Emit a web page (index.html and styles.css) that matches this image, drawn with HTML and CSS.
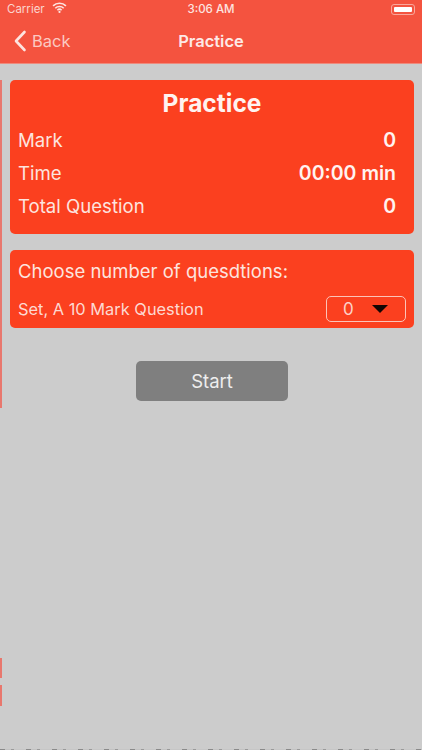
FILE: index.html
```html
<!DOCTYPE html>
<html lang="en">
<head>
<meta charset="utf-8">
<title>Practice</title>
<link rel="stylesheet" href="styles.css">
</head>
<body>
<div class="screen">
  <header class="bar">
    <div class="status">
      <div class="status-left">
        <span>Carrier</span>
        <svg class="wifi" viewBox="0 0 16 12" width="15" height="11" aria-hidden="true">
          <path d="M1 4.2a10 10 0 0 1 14 0M3.4 6.8a6.6 6.6 0 0 1 9.2 0M5.7 9a3.3 3.3 0 0 1 4.6 0" fill="none" stroke="#fde4e0" stroke-width="1.8"/>
          <circle cx="8" cy="10.8" r="1.2" fill="#fde4e0"/>
        </svg>
      </div>
      <div class="status-time">3:06 AM</div>
      <div class="status-right">
        <div class="battery"><div class="battery-fill"></div></div>
      </div>
    </div>
    <nav class="nav">
      <div class="back">
        <svg viewBox="0 0 14 22" width="14" height="22" aria-hidden="true">
          <path d="M11.5 2 L3 11 L11.5 20" fill="none" stroke="#fde4e0" stroke-width="2.6" stroke-linecap="round" stroke-linejoin="round"/>
        </svg>
        <span>Back</span>
      </div>
      <div class="nav-title">Practice</div>
    </nav>
  </header>

  <main class="content">
    <section class="card summary">
      <h1 class="card-title">Practice</h1>
      <div class="row"><span>Mark</span><strong>0</strong></div>
      <div class="row"><span>Time</span><strong>00:00 min</strong></div>
      <div class="row"><span>Total Question</span><strong>0</strong></div>
    </section>

    <section class="card chooser">
      <div class="choose-label">Choose number of quesdtions:</div>
      <div class="choose-row">
        <span>Set, A 10 Mark Question</span>
        <div class="select">
          <span class="select-value">0</span>
          <span class="select-arrow"></span>
        </div>
      </div>
    </section>

    <div class="actions"><button class="start" type="button">Start</button></div>
  </main>

  <div class="edge edge-long"></div>
  <div class="edge edge-a"></div>
  <div class="edge edge-b"></div>
  <div class="noise"></div>
</div>
</body>
</html>
```

FILE: styles.css
```css
* { box-sizing: border-box; }

html, body {
  margin: 0;
  padding: 0;
  background: #cccccc;
}

.screen {
  position: relative;
  width: 422px;
  height: 750px;
  overflow: hidden;
  display: flex;
  flex-direction: column;
  background: #cccccc;
  font-family: Inter, "Liberation Sans", sans-serif;
  color: #fdeae6;
}

.bar {
  height: 64px;
  flex: none;
  background: #f4533f;
  border-bottom: 1px solid #ee8a7c;
}

.status {
  height: 18px;
  display: grid;
  grid-template-columns: 1fr auto 1fr;
  align-items: center;
  padding: 0 7px 0 7px;
  font-size: 11.5px;
  color: #fbd3cd;
}

.status-left {
  display: flex;
  align-items: center;
  gap: 7px;
}

.wifi { margin-top: -3px; }

.status-time {
  color: #fde4e0;
  font-weight: 500;
  font-size: 11.5px;
}

.status-right {
  display: flex;
  justify-content: flex-end;
}

.battery {
  width: 24px;
  height: 11px;
  padding: 2px;
  border: 1px solid #f9a79c;
  border-radius: 3px;
}

.battery-fill {
  height: 100%;
  background: #ffffff;
  border-radius: 1px;
}

.nav {
  height: 45px;
  display: grid;
  grid-template-columns: 1fr auto 1fr;
  align-items: center;
  padding: 0 13px;
}

.back {
  grid-column: 1;
  grid-row: 1;
  display: flex;
  align-items: center;
  gap: 5px;
  font-size: 16.5px;
  color: #fbc9c2;
}

.nav-title {
  grid-column: 2;
  grid-row: 1;
  font-size: 16.5px;
  font-weight: 600;
  color: #fde9e6;
}

.content {
  flex: 1;
  padding: 16px 8px 0 10px;
  display: flex;
  flex-direction: column;
}

.card {
  background: #fb401f;
  border-radius: 5px;
}

.summary {
  height: 154px;
  padding: 8px 18px 0 8px;
}

.card-title {
  margin: 0 0 5px;
  text-align: center;
  font-size: 24.5px;
  line-height: 30px;
  font-weight: 700;
  color: #fff3f0;
  padding-left: 10px;
}

.row {
  display: flex;
  justify-content: space-between;
  align-items: center;
  height: 33px;
  font-size: 18.6px;
  color: #fde4df;
}

.row strong {
  font-size: 19.5px;
  font-weight: 600;
  color: #fff3f0;
}

.chooser {
  height: 78px;
  margin-top: 16px;
  padding: 9px 8px 0 8px;
}

.choose-label {
  font-size: 18.5px;
  line-height: 24px;
  color: #fde4df;
}

.choose-row {
  margin-top: 13px;
  display: flex;
  justify-content: space-between;
  align-items: center;
  font-size: 16.4px;
  color: #fdd9d2;
}

.select {
  width: 80px;
  height: 26px;
  border: 1px solid #fcc3b8;
  border-radius: 5px;
  display: flex;
  align-items: center;
  padding-left: 16px;
  gap: 18px;
  font-size: 17px;
  color: #fcd0c7;
}

.select-arrow {
  width: 0;
  height: 0;
  border-left: 8px solid transparent;
  border-right: 8px solid transparent;
  border-top: 8px solid #140604;
}

.actions {
  display: flex;
  justify-content: center;
  margin-top: 33px;
}

.start {
  width: 152px;
  height: 40px;
  border: 0;
  border-radius: 5px;
  background: #7f7f7f;
  color: #eeeeee;
  font: 400 18.5px Inter, "Liberation Sans", sans-serif;
}

.edge {
  position: absolute;
  left: 0;
  width: 1.5px;
  background: #e8776d;
}

.edge-long { top: 80px; height: 328px; }
.edge-a { top: 658px; height: 20px; }
.edge-b { top: 685px; height: 21px; }

.noise {
  position: absolute;
  left: 0;
  right: 0;
  bottom: 0;
  height: 1.5px;
  background: repeating-linear-gradient(90deg, #8a8a8a 0 5px, #c2c2c2 5px 11px, #9a9a9a 11px 14px, #c6c6c6 14px 26px);
}
```
